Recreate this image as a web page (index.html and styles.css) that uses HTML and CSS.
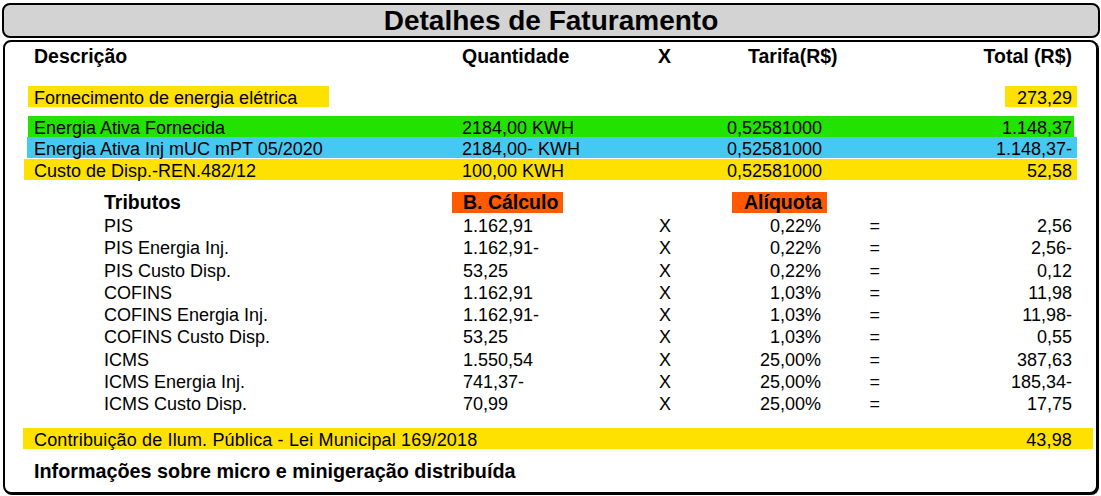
FILE: index.html
```html
<!DOCTYPE html>
<html lang="pt-BR">
<head>
<meta charset="utf-8">
<title>Detalhes de Faturamento</title>
<link rel="stylesheet" href="styles.css">
</head>
<body>
<div class="page">
  <div class="title-bar">Detalhes de Faturamento</div>
  <div class="panel">
    <div class="head-row">
      <span>Descrição</span>
      <span>Quantidade</span>
      <span>X</span>
      <span>Tarifa(R$)</span>
      <span class="right">Total (R$)</span>
    </div>

    <div class="supply-row">
      <span class="supply-label">Fornecimento de energia elétrica</span>
      <span class="supply-total">273,29</span>
    </div>

    <div class="item-row green">
      <span>Energia Ativa Fornecida</span>
      <span>2184,00 KWH</span>
      <span>0,52581000</span>
      <span class="right">1.148,37</span>
    </div>
    <div class="item-row blue">
      <span>Energia Ativa Inj mUC mPT 05/2020</span>
      <span>2184,00- KWH</span>
      <span>0,52581000</span>
      <span class="right">1.148,37-</span>
    </div>
    <div class="item-row yellow">
      <span>Custo de Disp.-REN.482/12</span>
      <span>100,00 KWH</span>
      <span>0,52581000</span>
      <span class="right">52,58</span>
    </div>

    <div class="tax-head">
      <span class="bold">Tributos</span>
      <span class="tag tag-base">B. Cálculo</span>
      <span></span>
      <span class="tag tag-rate">Alíquota</span>
    </div>

    <div class="tax-list">
      <div class="tax-row"><span>PIS</span><span>1.162,91</span><span class="x">X</span><span class="right">0,22%</span><span class="right">=</span><span class="right">2,56</span></div>
      <div class="tax-row"><span>PIS Energia Inj.</span><span>1.162,91-</span><span class="x">X</span><span class="right">0,22%</span><span class="right">=</span><span class="right">2,56-</span></div>
      <div class="tax-row"><span>PIS Custo Disp.</span><span>53,25</span><span class="x">X</span><span class="right">0,22%</span><span class="right">=</span><span class="right">0,12</span></div>
      <div class="tax-row"><span>COFINS</span><span>1.162,91</span><span class="x">X</span><span class="right">1,03%</span><span class="right">=</span><span class="right">11,98</span></div>
      <div class="tax-row"><span>COFINS Energia Inj.</span><span>1.162,91-</span><span class="x">X</span><span class="right">1,03%</span><span class="right">=</span><span class="right">11,98-</span></div>
      <div class="tax-row"><span>COFINS Custo Disp.</span><span>53,25</span><span class="x">X</span><span class="right">1,03%</span><span class="right">=</span><span class="right">0,55</span></div>
      <div class="tax-row"><span>ICMS</span><span>1.550,54</span><span class="x">X</span><span class="right">25,00%</span><span class="right">=</span><span class="right">387,63</span></div>
      <div class="tax-row"><span>ICMS Energia Inj.</span><span>741,37-</span><span class="x">X</span><span class="right">25,00%</span><span class="right">=</span><span class="right">185,34-</span></div>
      <div class="tax-row"><span>ICMS Custo Disp.</span><span>70,99</span><span class="x">X</span><span class="right">25,00%</span><span class="right">=</span><span class="right">17,75</span></div>
    </div>

    <div class="contrib-row">
      <span>Contribuição de Ilum. Pública - Lei Municipal 169/2018</span>
      <span>43,98</span>
    </div>

    <div class="info-title">Informações sobre micro e minigeração distribuída</div>
  </div>
</div>
</body>
</html>
```

FILE: styles.css
```css
* {
  box-sizing: border-box;
}

html, body {
  margin: 0;
  padding: 0;
  background: #ffffff;
}

body {
  font-family: "Liberation Sans", Arial, sans-serif;
  color: #000000;
  font-size: 18px;
}

.page {
  width: 1101px;
  height: 496px;
  overflow: hidden;
}

.title-bar {
  margin: 3px 1px 0 2px;
  height: 35px;
  border: 2px solid #000;
  border-radius: 8px;
  background: #d3d3d4;
  font-weight: bold;
  font-size: 28px;
  line-height: 31px;
  text-align: center;
}

.panel {
  margin: 2px 3px 0 3px;
  height: 454px;
  border: 2px solid #000;
  border-radius: 8px;
  box-shadow: 1px 1px 0 #000;
  background: #fff;
}

.right {
  justify-self: end;
  text-align: right;
}

.bold {
  font-weight: bold;
}

.head-row {
  display: grid;
  grid-template-columns: 428px 196px 90px 1fr auto;
  margin: 3px 24px 0 29px;
  height: 22px;
  line-height: 22px;
  font-weight: bold;
  font-size: 19.5px;
  white-space: nowrap;
}

.supply-row {
  display: flex;
  justify-content: space-between;
  margin: 19px 19px 0 23px;
  height: 21px;
}

.supply-label,
.supply-total {
  background: #ffe100;
  height: 21px;
  padding-top: 2px;
  line-height: 20px;
}

.supply-label {
  width: 301px;
  padding-left: 6px;
}

.supply-total {
  width: 72px;
  padding-right: 5px;
  text-align: right;
}

.item-row {
  display: grid;
  grid-template-columns: 428px 265px 200px 1fr;
  height: 21px;
  padding-top: 2px;
  line-height: 20px;
  white-space: nowrap;
}

.item-row.green {
  margin: 9px 22px 0 23px;
  padding-left: 6px;
  padding-right: 2px;
  background: #22e300;
}

.item-row.blue {
  margin: 0 19px 0 22px;
  padding-left: 7px;
  padding-right: 5px;
  background: #45c9f3;
}

.item-row.yellow {
  margin: 1px 19px 0 19px;
  padding-left: 10px;
  padding-right: 5px;
  background: #ffe100;
}

.tax-head,
.tax-row {
  display: grid;
  grid-template-columns: 359px 196px 12px 150px 59px 1fr;
  margin-left: 99px;
  margin-right: 24px;
  white-space: nowrap;
}

.tax-head {
  margin-top: 12px;
  height: 21px;
  line-height: 21px;
  font-size: 19.5px;
}

.tag {
  background: #ff5a00;
  font-weight: bold;
  color: #000;
}

.tag-base {
  justify-self: start;
  margin-left: -11px;
  padding: 0 5px 0 11px;
}

.tag-rate {
  justify-self: end;
  margin-right: -6px;
  padding: 0 5px 0 12px;
}

.tax-list {
  margin-top: 2px;
}

.tax-row {
  height: 22.3px;
  line-height: 22.3px;
}

.tax-row .x {
  text-align: center;
}

.contrib-row {
  display: flex;
  justify-content: space-between;
  margin: 12px 3px 0 18px;
  padding: 2px 21px 0 11px;
  height: 21px;
  line-height: 20px;
  letter-spacing: 0.15px;
  background: #ffe100;
}

.info-title {
  margin: 11px 0 0 29px;
  height: 22px;
  line-height: 22px;
  font-weight: bold;
  font-size: 19.8px;
}
```
